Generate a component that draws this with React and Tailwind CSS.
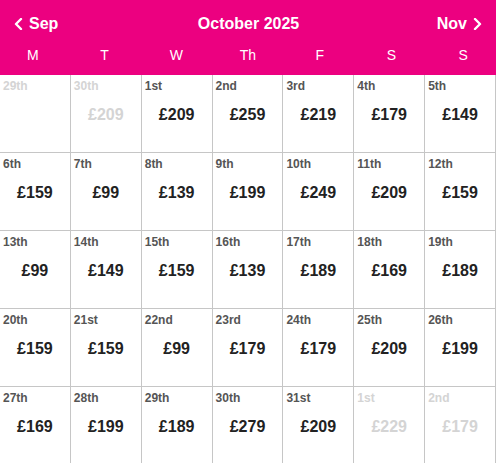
import React from 'react';

const WEEKDAYS = ['M', 'T', 'W', 'Th', 'F', 'S', 'S'];

// [label, price, dimmed]
const DAYS = [
  ['29th', null, true], ['30th', 209, true], ['1st', 209], ['2nd', 259], ['3rd', 219], ['4th', 179], ['5th', 149],
  ['6th', 159], ['7th', 99], ['8th', 139], ['9th', 199], ['10th', 249], ['11th', 209], ['12th', 159],
  ['13th', 99], ['14th', 149], ['15th', 159], ['16th', 139], ['17th', 189], ['18th', 169], ['19th', 189],
  ['20th', 159], ['21st', 159], ['22nd', 99], ['23rd', 179], ['24th', 179], ['25th', 209], ['26th', 199],
  ['27th', 169], ['28th', 199], ['29th', 189], ['30th', 279], ['31st', 209], ['1st', 229, true], ['2nd', 179, true],
];

function Chevron({ dir }) {
  return (
    <svg width="9" height="12" viewBox="0 0 9 12" fill="none" className="shrink-0">
      <polyline
        points={dir === 'left' ? '7,1 2,6 7,11' : '2,1 7,6 2,11'}
        stroke="white"
        strokeWidth="2.4"
        strokeLinecap="round"
        strokeLinejoin="round"
      />
    </svg>
  );
}

function DayCell({ label, price, dimmed }) {
  return (
    <div className="h-[78px] border-r border-b border-[#c6c6c6] pt-[4px] pl-[3px] flex flex-col">
      <span className={`text-[12px] leading-[14px] font-bold ${dimmed ? 'text-[#d4d4d4]' : 'text-[#555555]'}`}>
        {label}
      </span>
      {price !== null && (
        <span
          className={`mt-[14px] text-center pr-[3px] text-[16px] leading-4 font-bold ${dimmed ? 'text-[#d4d4d4]' : 'text-[#222222]'}`}
        >
          £{price}
        </span>
      )}
    </div>
  );
}

export default function App() {
  return (
    <div className="w-[496px] h-[463px] overflow-hidden bg-white font-['Liberation_Sans',Arial,sans-serif]">
      <div className="bg-[#ec0080] text-white pb-[11px] overflow-hidden">
        <div className="h-[46px] pt-[1px] flex items-center justify-between px-[14px]">
          <div className="flex items-center gap-[6px] text-[16px] font-bold">
            <Chevron dir="left" />
            <span>Sep</span>
          </div>
          <span className="text-[16px] font-bold pl-[2px]">October 2025</span>
          <div className="flex items-center gap-[6px] text-[16px] font-bold">
            <span>Nov</span>
            <Chevron dir="right" />
          </div>
        </div>
        <div className="grid grid-cols-7 w-[502px] -ml-[3px] h-[18px] items-center text-[14px] leading-[18px]">
          {WEEKDAYS.map((d, i) => (
            <span key={i} className="text-center">{d}</span>
          ))}
        </div>
      </div>
      <div className="grid grid-cols-7">
        {DAYS.map(([label, price, dimmed], i) => (
          <DayCell key={i} label={label} price={price} dimmed={!!dimmed} />
        ))}
      </div>
    </div>
  );
}
